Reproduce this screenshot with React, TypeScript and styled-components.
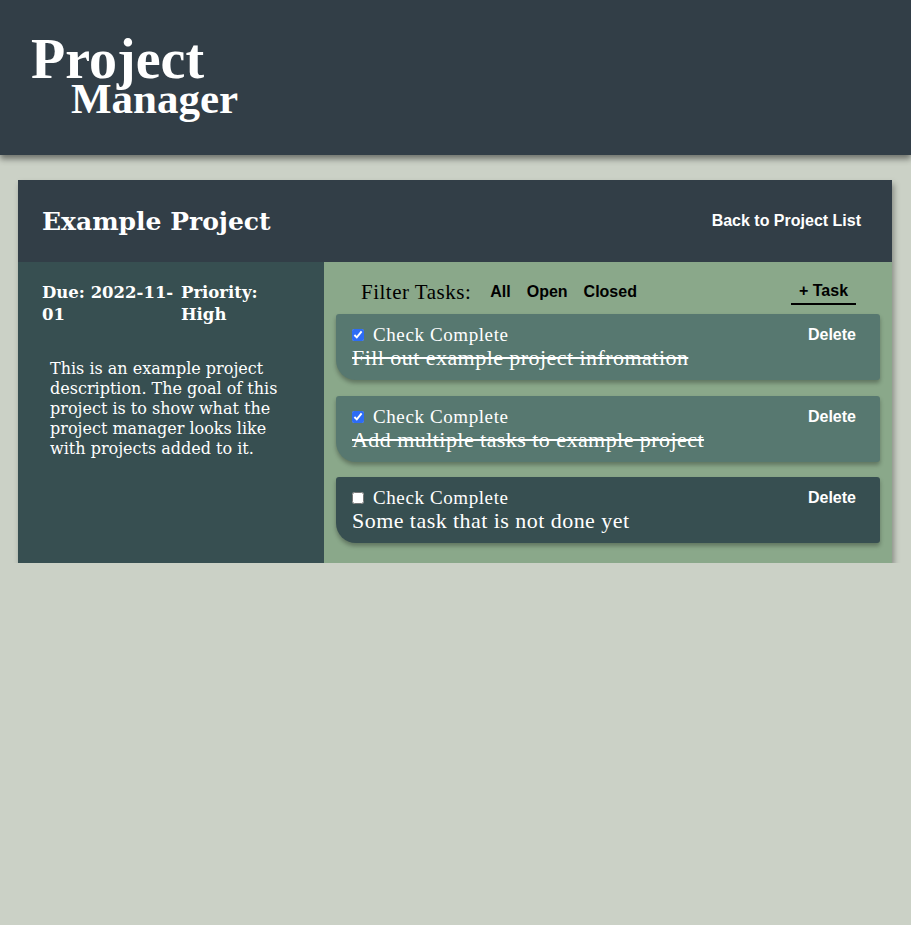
import React, { useState } from "react";
import styled, { createGlobalStyle } from "styled-components";

const GlobalStyle = createGlobalStyle`
  body {
    margin: 0;
    background: #cbd1c6;
    font-family: "DejaVu Serif", "Liberation Serif", serif;
  }
  * { box-sizing: border-box; }
`;

const TopBar = styled.header`
  height: 155px;
  background: #323e47;
  box-shadow: 0 4px 6px rgba(0, 0, 0, 0.45);
  padding: 34px 0 0 31px;
  color: #fff;
`;

const Logo = styled.h1`
  margin: 0;
  font-family: "Liberation Serif", serif;
  font-weight: 700;
  display: flex;
  flex-direction: column;
  align-items: flex-start;
`;

const LogoTop = styled.span`
  font-size: 56px;
  line-height: 50px;
`;

const LogoBottom = styled.span`
  font-size: 43px;
  line-height: 29px;
  margin-left: 40px;
`;

const Main = styled.main`
  padding: 25px 19px 0 18px;
`;

const ProjectCard = styled.section`
  box-shadow: 2px 4px 6px rgba(0, 0, 0, 0.35);
`;

const CardHead = styled.div`
  height: 82px;
  background: #323e47;
  display: flex;
  align-items: center;
  justify-content: space-between;
  padding: 0 31px 0 24px;
`;

const ProjectTitle = styled.h2`
  margin: 0;
  color: #fff;
  font-size: 25px;
  font-weight: 700;
`;

const LinkButton = styled.button`
  background: none;
  border: none;
  padding: 0;
  color: #fff;
  font-family: "Liberation Sans", Arial, sans-serif;
  font-weight: 700;
  font-size: 16px;
  cursor: pointer;
`;

const CardBody = styled.div`
  display: flex;
  height: 301px;
`;

const InfoPanel = styled.div`
  width: 306px;
  background: #374f51;
  color: #fff;
  padding: 20px 20px 20px 24px;
`;

const MetaGrid = styled.div`
  display: grid;
  grid-template-columns: 137px 1fr;
  column-gap: 2px;
`;

const MetaItem = styled.div`
  font-weight: 700;
  font-size: 16.5px;
  line-height: 22px;
`;

const Description = styled.p`
  margin: 33px 0 0 8px;
  width: 236px;
  font-size: 16px;
  line-height: 20px;
`;

const TaskPanel = styled.div`
  flex: 1;
  background: #8aa88a;
  padding: 12px 12px 20px;
  display: flex;
  flex-direction: column;
`;

const FilterRow = styled.div`
  display: flex;
  align-items: center;
  padding: 0 24px 0 25px;
  height: 40px;
  margin-bottom: 4px;
`;

const FilterLabel = styled.span`
  font-family: "Liberation Serif", serif;
  font-size: 21px;
  letter-spacing: 0.5px;
  margin-right: 19px;
`;

const FilterButton = styled.button`
  background: none;
  border: none;
  padding: 0;
  margin-right: 16px;
  font-family: "Liberation Sans", Arial, sans-serif;
  font-weight: 700;
  font-size: 16px;
  color: #000;
  cursor: pointer;
`;

const AddButton = styled(FilterButton)`
  margin: 0 0 0 auto;
  width: 65px;
  padding: 3px 0 3px;
  border-bottom: 2px solid #000;
`;

const TaskList = styled.div`
  display: flex;
  flex-direction: column;
  gap: 15.5px;
`;

const TaskCard = styled.div<{ $done: boolean }>`
  background: ${(p) => (p.$done ? "#577870" : "#374f51")};
  border-radius: 3px 3px 3px 20px;
  box-shadow: 0 3px 4px rgba(0, 0, 0, 0.3);
  padding: 10px 24px 10px 16px;
  color: #fff;
  font-family: "Liberation Serif", serif;
  height: 66px;
`;

const TaskTop = styled.div`
  display: flex;
  align-items: center;
  justify-content: space-between;
`;

const CheckLabel = styled.label`
  display: flex;
  align-items: center;
  font-size: 19px;
  letter-spacing: 0.6px;
  line-height: 22px;
`;

const CheckBox = styled.input`
  width: 12px;
  height: 12px;
  margin: 0 9px 0 0;
  accent-color: #2d6cf5;
`;

const TaskText = styled.div<{ $done: boolean }>`
  font-size: 22px;
  letter-spacing: 0.45px;
  line-height: 24px;
  text-decoration: ${(p) => (p.$done ? "line-through" : "none")};
`;

const initialTasks = [
  { id: 1, text: "Fill out example project infromation", done: true },
  { id: 2, text: "Add multiple tasks to example project", done: true },
  { id: 3, text: "Some task that is not done yet", done: false },
];

export default function App() {
  const [tasks, setTasks] = useState(initialTasks);

  const toggle = (id: number) =>
    setTasks((t) => t.map((x) => (x.id === id ? { ...x, done: !x.done } : x)));

  return (
    <>
      <GlobalStyle />
      <TopBar>
        <Logo>
          <LogoTop>Project</LogoTop>
          <LogoBottom>Manager</LogoBottom>
        </Logo>
      </TopBar>
      <Main>
        <ProjectCard>
          <CardHead>
            <ProjectTitle>Example Project</ProjectTitle>
            <LinkButton>Back to Project List</LinkButton>
          </CardHead>
          <CardBody>
            <InfoPanel>
              <MetaGrid>
                <MetaItem>Due: 2022-11-01</MetaItem>
                <MetaItem>Priority: High</MetaItem>
              </MetaGrid>
              <Description>
                This is an example project description. The goal of this project is to
                show what the project manager looks like with projects added to it.
              </Description>
            </InfoPanel>
            <TaskPanel>
              <FilterRow>
                <FilterLabel>Filter Tasks:</FilterLabel>
                <FilterButton>All</FilterButton>
                <FilterButton>Open</FilterButton>
                <FilterButton>Closed</FilterButton>
                <AddButton>+ Task</AddButton>
              </FilterRow>
              <TaskList>
                {tasks.map((t) => (
                  <TaskCard key={t.id} $done={t.done}>
                    <TaskTop>
                      <CheckLabel>
                        <CheckBox
                          type="checkbox"
                          checked={t.done}
                          onChange={() => toggle(t.id)}
                        />
                        Check Complete
                      </CheckLabel>
                      <LinkButton>Delete</LinkButton>
                    </TaskTop>
                    <TaskText $done={t.done}>{t.text}</TaskText>
                  </TaskCard>
                ))}
              </TaskList>
            </TaskPanel>
          </CardBody>
        </ProjectCard>
      </Main>
    </>
  );
}
